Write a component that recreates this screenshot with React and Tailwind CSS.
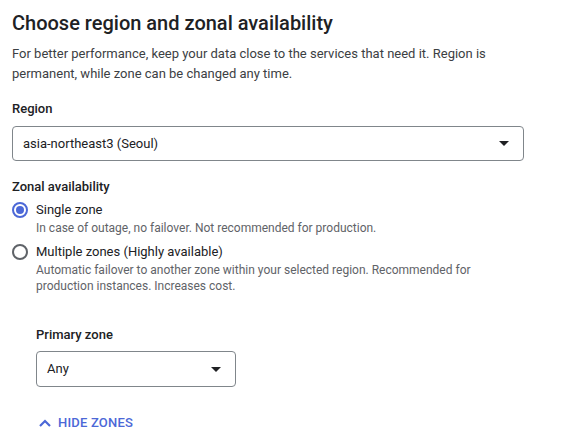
export default function App() {
  return (
    <div className="w-[577px] h-[443px] bg-white px-3 pt-[9px] font-['Roboto',sans-serif] text-[#202124] overflow-hidden">
      <h1 className="text-[20px] leading-[28px] font-medium">Choose region and zonal availability</h1>

      <p className="mt-[7px] w-[500px] text-[13px] leading-5 text-[#3c4043]">
        For better performance, keep your data close to the services that need it. Region is permanent, while zone can be changed any time.
      </p>

      {/* Region */}
      <div className="mt-[15px] text-[13px] font-medium leading-5">Region</div>
      <div className="mt-[7px] w-[512px] h-[35px] border border-[#80868b] rounded flex items-center justify-between pl-[10px] pr-[14px]">
        <span className="text-[13px]">asia-northeast3 (Seoul)</span>
        <Caret />
      </div>

      {/* Zonal availability */}
      <div className="mt-[16px] text-[13px] font-medium leading-5">Zonal availability</div>

      <div className="mt-[3px] flex gap-2">
        <Radio checked />
        <div>
          <div className="text-[13px] leading-5">Single zone</div>
          <div className="text-xs leading-4 text-[#5f6368]">In case of outage, no failover. Not recommended for production.</div>
        </div>
      </div>

      <div className="mt-[6px] flex gap-2">
        <Radio />
        <div>
          <div className="text-[13px] leading-5">Multiple zones (Highly available)</div>
          <div className="w-[450px] text-xs leading-4 text-[#5f6368]">
            Automatic failover to another zone within your selected region. Recommended for production instances. Increases cost.
          </div>
        </div>
      </div>

      {/* Primary zone */}
      <div className="ml-6">
        <div className="mt-[31px] text-[13px] font-medium leading-5">Primary zone</div>
        <div className="mt-[6px] w-[200px] h-[36px] border border-[#80868b] rounded flex items-center justify-between pl-[10px] pr-[14px]">
          <span className="text-[13px]">Any</span>
          <Caret />
        </div>
      </div>

      <button className="mt-[26px] ml-[26px] flex items-center gap-[6px] text-[13px] font-medium text-[#4c68d7] tracking-[0.2px]">
        <svg width="14" height="10" viewBox="0 0 14 10">
          <path d="M2 8 L7 3 L12 8" fill="none" stroke="currentColor" strokeWidth="2.2" />
        </svg>
        HIDE ZONES
      </button>
    </div>
  );
}

function Caret() {
  return (
    <svg width="10" height="5" viewBox="0 0 10 5">
      <path d="M0 0 L10 0 L5 5 Z" fill="#202124" />
    </svg>
  );
}

function Radio({ checked }) {
  return (
    <div className="w-4 h-5 flex items-center justify-center shrink-0">
      {checked ? (
        <div className="w-4 h-4 rounded-full border-2 border-[#4c68d7] flex items-center justify-center">
          <div className="w-2 h-2 rounded-full bg-[#4c68d7]" />
        </div>
      ) : (
        <div className="w-4 h-4 rounded-full border-2 border-[#5f6368]" />
      )}
    </div>
  );
}
